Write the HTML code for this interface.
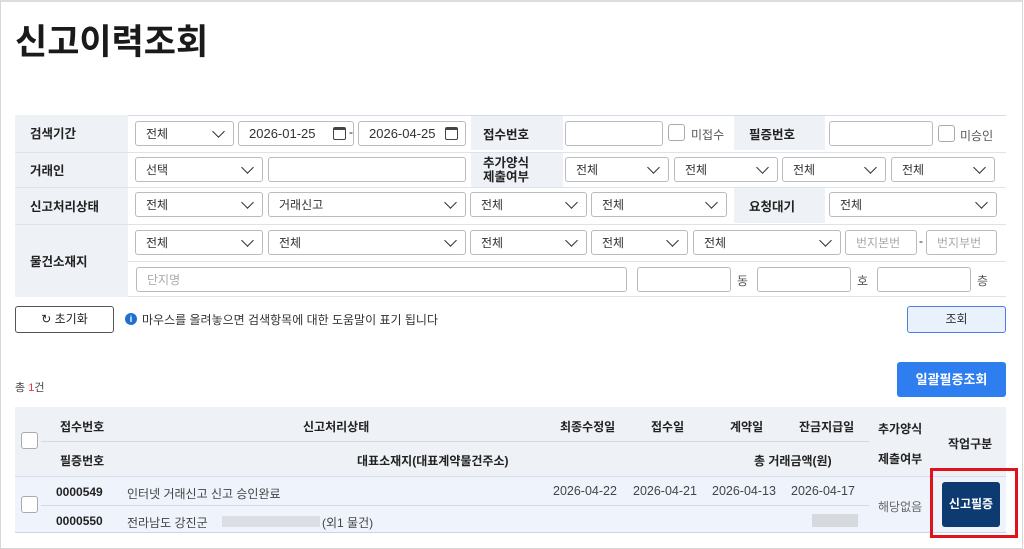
<!DOCTYPE html>
<html><head><meta charset="utf-8"><style>
*{box-sizing:border-box;margin:0;padding:0}
body{width:1024px;height:549px;position:relative;background:#fff;font-family:"Liberation Sans","Noto Sans CJK KR",sans-serif;color:#222;overflow:hidden;font-size:12px}
.frame{position:absolute;left:0;top:0;width:1023px;height:549px;border:1px solid #d6d6d6;border-top:2px solid #ddd}
.a{position:absolute}
.lb{position:absolute;background:#eef1f6;font-weight:bold;font-size:12.5px;color:#222;display:flex;align-items:center}
.in{position:absolute;height:25px;border:1px solid #bbb;border-radius:3px;background:#fff;font-size:12px;padding-left:10px;line-height:24px;color:#333}
.ph{color:#aaa}
.sel::after{content:"";position:absolute;right:10px;top:5px;width:8px;height:8px;border-right:1.5px solid #333;border-bottom:1.5px solid #333;transform:rotate(45deg)}
.cb{position:absolute;width:17px;height:17px;border:1px solid #aaa;border-radius:3px;background:#fff}
.hl{position:absolute;left:15px;width:991px;height:1px;background:#dde3ec}
.cal{position:absolute;right:7px;top:5px;width:13px;height:13px;border:1.5px solid #444;border-radius:2px;border-top-width:3px}
.t{position:absolute;font-size:12px;white-space:nowrap}
.b{font-weight:bold}
.d{position:absolute;top:484px;font-size:12.5px;color:#444}
</style></head><body>
<div class="frame"></div>
<div class="a b" style="left:15px;top:14px;font-size:35px;color:#1a1a1a">신고이력조회</div>

<div class="a" style="left:15px;top:115px;width:991px;height:182px;background:#fff;border-top:1px solid #d3dbe8;border-bottom:1px solid #dde3ec"></div>
<div class="lb" style="left:15px;top:115px;width:113px;height:182px"></div>
<div class="hl" style="top:152px"></div><div class="hl" style="top:187px"></div><div class="hl" style="top:224px"></div><div class="hl" style="left:128px;width:878px;top:261px"></div>
<div class="lb" style="left:30px;top:121px;height:22px">검색기간</div>
<div class="lb" style="left:30px;top:158px;height:22px">거래인</div>
<div class="lb" style="left:30px;top:194px;height:22px">신고처리상태</div>
<div class="lb" style="left:30px;top:249px;height:22px">물건소재지</div>
<div class="lb" style="left:471px;top:116px;width:92px;height:34px;padding-left:12px">접수번호</div>
<div class="lb" style="left:734px;top:116px;width:91px;height:34px;padding-left:15px">필증번호</div>
<div class="lb" style="left:471px;top:153px;width:92px;height:34px;padding-left:12px;line-height:14px">추가양식<br>제출여부</div>
<div class="lb" style="left:734px;top:188px;width:91px;height:35px;padding-left:15px">요청대기</div>

<div class="in sel" style="left:135px;top:121px;width:99px">전체</div>
<div class="in" style="left:238px;top:121px;width:116px;font-size:13px">2026-01-25<span class="cal"></span></div>
<div class="t" style="left:349px;top:125px">-</div>
<div class="in" style="left:358px;top:121px;width:108px;font-size:13px">2026-04-25<span class="cal"></span></div>
<div class="in" style="left:565px;top:121px;width:98px"></div>
<div class="cb" style="left:668px;top:124px"></div><div class="t" style="left:691px;top:126px;color:#555">미접수</div>
<div class="in" style="left:829px;top:121px;width:104px"></div>
<div class="cb" style="left:938px;top:125px"></div><div class="t" style="left:960px;top:127px;color:#555">미승인</div>

<div class="in sel" style="left:135px;top:157px;width:128px">선택</div>
<div class="in" style="left:268px;top:157px;width:198px"></div>
<div class="in sel" style="left:565px;top:157px;width:104px">전체</div>
<div class="in sel" style="left:674px;top:157px;width:104px">전체</div>
<div class="in sel" style="left:782px;top:157px;width:104px">전체</div>
<div class="in sel" style="left:891px;top:157px;width:104px">전체</div>

<div class="in sel" style="left:135px;top:192px;width:128px">전체</div>
<div class="in sel" style="left:268px;top:192px;width:198px">거래신고</div>
<div class="in sel" style="left:470px;top:192px;width:117px">전체</div>
<div class="in sel" style="left:591px;top:192px;width:136px">전체</div>
<div class="in sel" style="left:829px;top:192px;width:168px">전체</div>

<div class="in sel" style="left:135px;top:230px;width:128px">전체</div>
<div class="in sel" style="left:268px;top:230px;width:198px">전체</div>
<div class="in sel" style="left:470px;top:230px;width:117px">전체</div>
<div class="in sel" style="left:591px;top:230px;width:97px">전체</div>
<div class="in sel" style="left:693px;top:230px;width:148px">전체</div>
<div class="in ph" style="left:845px;top:230px;width:72px">번지본번</div>
<div class="t" style="left:919px;top:234px">-</div>
<div class="in ph" style="left:926px;top:230px;width:71px">번지부번</div>

<div class="in ph" style="left:136px;top:267px;width:491px">단지명</div>
<div class="in" style="left:637px;top:267px;width:94px"></div><div class="t" style="left:737px;top:272px;color:#555">동</div>
<div class="in" style="left:757px;top:267px;width:94px"></div><div class="t" style="left:857px;top:272px;color:#555">호</div>
<div class="in" style="left:877px;top:267px;width:94px"></div><div class="t" style="left:977px;top:272px;color:#555">층</div>

<div class="a" style="left:15px;top:306px;width:99px;height:27px;border:1px solid #555;border-radius:3px;font-size:12px;line-height:25px;text-align:center">&#x21bb; 초기화</div>
<div class="a" style="left:125px;top:313px;width:12px;height:12px;border-radius:50%;background:#1f6fd1;color:#fff;font-size:9px;line-height:12px;text-align:center;font-weight:bold">i</div>
<div class="t" style="left:142px;top:311px;color:#333">마우스를 올려놓으면 검색항목에 대한 도움말이 표기 됩니다</div>
<div class="a" style="left:907px;top:306px;width:99px;height:27px;border:1px solid #4a7fe0;border-radius:3px;background:#e9f1fd;font-size:12px;line-height:25px;text-align:center;color:#333">조회</div>

<div class="t" style="left:15px;top:379px;font-size:11px;color:#444">총 <span style="color:#e33">1</span>건</div>
<div class="a b" style="left:897px;top:362px;width:109px;height:35px;background:#2f7ef0;border-radius:3px;color:#fff;font-size:13px;line-height:35px;text-align:center">일괄필증조회</div>

<div class="a" style="left:15px;top:407px;width:991px;height:69px;background:#eef1f6"></div>
<div class="a" style="left:41px;top:441px;width:828px;height:1px;background:#d4dae3"></div>
<div class="a" style="left:15px;top:476px;width:991px;height:57px;background:#eef3fc;border-top:1px solid #d8dee8;border-bottom:1px solid #cfd5de"></div>
<div class="a" style="left:41px;top:505px;width:828px;height:1px;background:#d4dae3"></div>
<div class="cb" style="left:21px;top:432px"></div>
<div class="cb" style="left:21px;top:496px"></div>
<div class="t b" style="left:60px;top:418px">접수번호</div>
<div class="t b" style="left:303px;top:418px">신고처리상태</div>
<div class="t b" style="left:560px;top:418px">최종수정일</div>
<div class="t b" style="left:651px;top:418px">접수일</div>
<div class="t b" style="left:730px;top:418px">계약일</div>
<div class="t b" style="left:799px;top:418px">잔금지급일</div>
<div class="t b" style="left:878px;top:420px">추가양식</div>
<div class="t b" style="left:878px;top:450px">제출여부</div>
<div class="t b" style="left:948px;top:435px">작업구분</div>
<div class="t b" style="left:60px;top:452px">필증번호</div>
<div class="t b" style="left:357px;top:452px">대표소재지(대표계약물건주소)</div>
<div class="t b" style="left:754px;top:452px">총 거래금액(원)</div>
<div class="t b" style="left:56px;top:485px">0000549</div>
<div class="t" style="left:127px;top:485px;color:#444">인터넷 거래신고 신고 승인완료</div>
<div class="d" style="left:553px">2026-04-22</div>
<div class="d" style="left:633px">2026-04-21</div>
<div class="d" style="left:712px">2026-04-13</div>
<div class="d" style="left:791px">2026-04-17</div>
<div class="t b" style="left:56px;top:514px">0000550</div>
<div class="t" style="left:127px;top:514px;color:#444">전라남도 강진군</div>
<div class="a" style="left:222px;top:516px;width:98px;height:11px;background:#d6d9de;opacity:.8"></div>
<div class="t" style="left:322px;top:514px;color:#444">(외1 물건)</div>
<div class="a" style="left:812px;top:514px;width:46px;height:13px;background:#d6d9de"></div>
<div class="t" style="left:878px;top:498px;color:#666">해당없음</div>
<div class="a" style="left:930px;top:468px;width:88px;height:70px;border:3px solid #e0121b"></div>
<div class="a b" style="left:942px;top:482px;width:58px;height:45px;background:#0d3a70;border-radius:3px;color:#fff;font-size:12px;line-height:45px;text-align:center">신고필증</div>
</body></html>
